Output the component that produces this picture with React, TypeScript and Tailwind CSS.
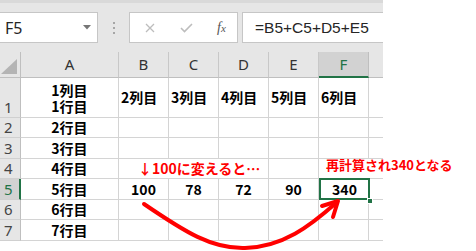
import React from "react";

const cjk = { fontFamily: '"Noto Sans CJK JP", "Noto Sans", sans-serif' };
const ui = { fontFamily: '"Noto Sans", "Liberation Sans", sans-serif' };

// column widths incl. right grid line
const colW = ["w-[98px]", "w-[50px]", "w-[50px]", "w-[50px]", "w-[50px]", "w-[50px]", "w-[14px]"];
const letters = ["A", "B", "C", "D", "E", "F", ""];

function Corner() {
  return (
    <div className="w-[21px] h-full border-r border-b border-[#bfbfbf] flex items-end justify-end pr-[3px] pb-[3px]">
      <svg width="16" height="15" viewBox="0 0 16 15">
        <polygon points="16,0 16,15 0,15" fill="#b4b4b4" />
      </svg>
    </div>
  );
}

function RowHead({ n, h, active }: { n: number; h: string; active?: boolean }) {
  return (
    <div
      className={`w-[21px] ${h} flex items-end pl-[4px] border-b border-[#d0d0d0] text-[15px] leading-[20px] ${
        active ? "bg-[#d2d2d2] border-r-2 border-r-[#217346] text-[#217346]" : "bg-[#e6e6e6] border-r border-r-[#bfbfbf] text-[#444]"
      }`}
      style={ui}
    >
      {n}
    </div>
  );
}

function Cell({
  w,
  children,
  align = "center",
  last,
  red,
  className = "",
}: {
  w: string;
  children?: React.ReactNode;
  align?: "center" | "left";
  last?: boolean;
  red?: boolean;
  className?: string;
}) {
  return (
    <div
      className={`${w} h-full flex items-center border-b border-[#d4d4d4] ${last ? "" : "border-r"} ${
        align === "center" ? "justify-center" : "justify-start pl-[2px]"
      } font-bold whitespace-nowrap ${red ? "text-[#ff0000]" : "text-black text-[14px]"} ${className}`}
      style={cjk}
    >
      {children}
    </div>
  );
}

function PlainRow({ n, h, label }: { n: number; h: string; label: string }) {
  return (
    <div className={`flex ${h}`}>
      <RowHead n={n} h="h-full" />
      <Cell w={colW[0]}>{label}</Cell>
      {colW.slice(1).map((w, i) => (
        <Cell key={i} w={w} last={i === 5} />
      ))}
    </div>
  );
}

export default function App() {
  return (
    <div className="relative w-[476px] h-[251px] bg-white overflow-hidden">
      <div className="w-[383px]">
        {/* formula toolbar */}
        <div className="h-[52px] bg-[#e6e6e6] border-t-[3px] border-[#d9d9d9] flex items-start pt-[9px]">
          <div className="w-[98px] h-[31px] bg-white border border-l-0 border-[#c6c6c6] flex items-center justify-between pl-[5px] pr-[6px]">
            <span className="text-[16px] text-[#262626]" style={ui}>
              F5
            </span>
            <svg width="8" height="5" viewBox="0 0 8 5">
              <polygon points="0,0 8,0 4,4.5" fill="#767676" />
            </svg>
          </div>
          <div className="w-[31px] h-[31px] flex flex-col items-center justify-center gap-[3px]">
            <span className="w-[2px] h-[2px] bg-[#a6a6a6]" />
            <span className="w-[2px] h-[2px] bg-[#a6a6a6]" />
            <span className="w-[2px] h-[2px] bg-[#a6a6a6]" />
          </div>
          <div className="w-[109px] h-[31px] bg-white border border-[#c6c6c6] flex items-center pl-[15px]">
            <svg width="10" height="10" viewBox="0 0 10 10">
              <path d="M1 1 L9 9 M9 1 L1 9" stroke="#bdbdbd" strokeWidth="1.3" />
            </svg>
            <svg width="13" height="10" viewBox="0 0 13 10" className="ml-[25px]">
              <path d="M1 5 L4.5 8.5 L12 1" stroke="#bdbdbd" strokeWidth="1.6" fill="none" />
            </svg>
            <span className="ml-[24px] text-[14px] italic text-[#555]" style={{ fontFamily: '"Liberation Serif", serif' }}>
              f<span className="text-[11px]">x</span>
            </span>
          </div>
          <div className="ml-[4px] flex-1 h-[31px] bg-white border border-r-0 border-[#c6c6c6] flex items-center pl-[12px]">
            <span className="text-[15.5px] text-[#262626] whitespace-nowrap" style={{ fontFamily: '"Liberation Sans", sans-serif' }}>
              =B5+C5+D5+E5
            </span>
          </div>
        </div>

        {/* column header */}
        <div className="flex h-[26px] bg-[#e6e6e6]">
          <Corner />
          {letters.map((l, i) => (
            <div
              key={i}
              className={`${colW[i]} h-full flex items-center justify-center text-[15px] ${
                l === "F"
                  ? "bg-[#d2d2d2] text-[#217346] border-b-2 border-b-[#217346] border-r border-r-[#bfbfbf]"
                  : `text-[#333] border-b border-b-[#bfbfbf] ${i < 6 ? "border-r border-r-[#c8c8c8]" : ""}`
              }`}
              style={ui}
            >
              {l}
            </div>
          ))}
        </div>

        {/* row 1 */}
        <div className="flex h-[40px]">
          <RowHead n={1} h="h-full" />
          <Cell w={colW[0]} className="flex-col gap-[2px] leading-[14px]">
            <div>1列目</div>
            <div>1行目</div>
          </Cell>
          <Cell w={colW[1]} align="left">2列目</Cell>
          <Cell w={colW[2]} align="left">3列目</Cell>
          <Cell w={colW[3]} align="left">4列目</Cell>
          <Cell w={colW[4]} align="left">5列目</Cell>
          <Cell w={colW[5]} align="left">6列目</Cell>
          <Cell w={colW[6]} last />
        </div>

        <PlainRow n={2} h="h-[20px]" label="2行目" />
        <PlainRow n={3} h="h-[21px]" label="3行目" />

        {/* row 4 */}
        <div className="flex h-[20px]">
          <RowHead n={4} h="h-full" />
          <Cell w={colW[0]}>4行目</Cell>
          <Cell w="w-[150px]" align="left" red className="!pl-[19px] text-[14px]">
            ↓100に変えると…
          </Cell>
          <Cell w={colW[4]} />
          <Cell w="w-[64px]" align="left" last red className="!pl-[7px] text-[13px] overflow-visible">
            <span className="mb-[8px]">再計算され340となる</span>
          </Cell>
        </div>

        {/* row 5 */}
        <div className="flex h-[21px]">
          <RowHead n={5} h="h-full" active />
          <Cell w={colW[0]}>5行目</Cell>
          <Cell w={colW[1]}>100</Cell>
          <Cell w={colW[2]}>78</Cell>
          <Cell w={colW[3]}>72</Cell>
          <Cell w={colW[4]}>90</Cell>
          <div className="relative w-[50px] h-full">
            <div
              className="w-[51px] h-[22px] -mt-[1px] border-2 border-[#217346] flex items-center justify-center text-[14px] font-bold text-black"
              style={cjk}
            >
              340
            </div>
            <span className="absolute right-[-4px] bottom-[-4px] w-[6px] h-[6px] bg-[#217346] border border-white" />
          </div>
          <Cell w={colW[6]} last />
        </div>

        <PlainRow n={6} h="h-[20px]" label="6行目" />
        <PlainRow n={7} h="h-[21px]" label="7行目" />
      </div>

      {/* red curved arrow */}
      <svg className="absolute left-0 top-0 pointer-events-none" width="476" height="251" viewBox="0 0 476 251">
        <path
          d="M144 204 C 185 232, 212 249, 245 248 C 283 247, 310 226, 336 203"
          stroke="#ff0000"
          strokeWidth="4"
          fill="none"
          strokeLinecap="round"
        />
        <path d="M322 206 L338 201 L333 217" stroke="#ff0000" strokeWidth="4" fill="none" strokeLinecap="round" strokeLinejoin="round" />
      </svg>
    </div>
  );
}
